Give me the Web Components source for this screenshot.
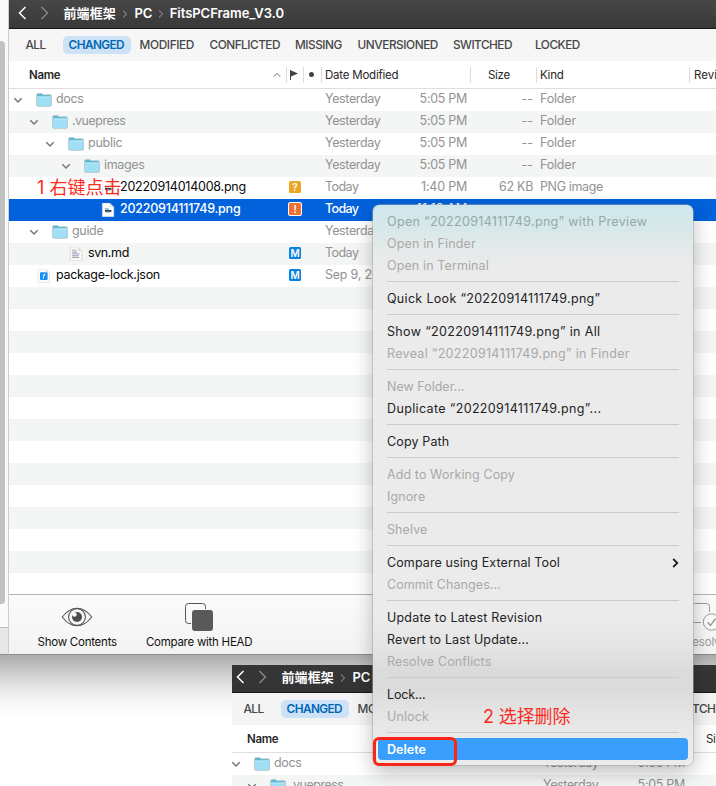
<!DOCTYPE html>
<html lang="zh">
<head>
<meta charset="utf-8">
<title>FitsPCFrame_V3.0</title>
<style>
html,body{margin:0;height:786px;overflow:hidden;background:#fff}
body{font-family:Inter,"Noto Sans CJK SC",sans-serif}
</style>
</head>
<body>
<svn-desktop></svn-desktop>
<script>
const make = (host, html) => { host.attachShadow({mode:'open'}).innerHTML = html; };
const label = (w, text, extra = '') => `<fit-label w="${w}" ${extra}>${text}</fit-label>`;

/* Desktop: sidebar sliver, two windows, menu and annotations */
class SvnDesktop extends HTMLElement {
  connectedCallback() {
    make(this, `<style>
      :host{display:block;position:relative;width:716px;height:786px;overflow:hidden;background:#fff}
      .shade{position:absolute;left:0;right:0;top:655px;height:66px;background:linear-gradient(#acacac,#bdbdbd 14%,#d2d2d2 32%,#e9e9e9 52%,#f8f8f8 74%,#fff)}
      .back{position:absolute;left:232px;top:665px;width:484px;height:121px;overflow:hidden}
      .back svn-window{margin:-1px 0 0 -5px;width:720px;--bar-top:#363636;--bar-end:#343434;--tabs:#f4f4f4}
      .front{position:absolute;left:0;top:0;width:716px;height:655px;display:flex;overflow:hidden}
      .front svn-window{flex:1}
      svn-menu{position:absolute;left:373px;top:205px}
      .note{position:absolute;color:#fc2b1c;font-size:18px;line-height:24px}
      .n1{left:37px;top:176px}.n2{left:483px;top:705px}
      .box{position:absolute;left:373px;top:737px;width:84px;height:29px;box-sizing:border-box;border:3px solid #fb2518;border-radius:6px}
    </style>
    <div class="shade"></div>
    <div class="back"><svn-window></svn-window></div>
    <div class="front"><side-sliver></side-sliver><svn-window full></svn-window></div>
    <div class="note n1">${label(84,'1 右键点击')}</div>
    <svn-menu></svn-menu>
    <div class="note n2">${label(87,'2 选择删除')}</div>
    <div class="box"></div>`);
  }
}

class SideSliver extends HTMLElement {
  connectedCallback() {
    make(this, `<style>
      :host{display:flex;flex-direction:column;box-sizing:border-box;width:9px;height:655px;background:#fafafa;border-right:1px solid #cdcdcd;border-bottom:1px solid #8f8f8f}
      .thumb{width:5px;height:563px;margin-top:41px;background:#c2c2c2;border-radius:0 4px 4px 0}
      .foot{margin-top:23px;flex:1;background:#e7e7e7;border-top:1px solid #bababa}
    </style><div class="thumb"></div><div class="foot"></div>`);
  }
}

/* Text set to a given width by adjusting its tracking */
class FitLabel extends HTMLElement {
  connectedCallback() {
    make(this, `<style>:host{display:inline-block;white-space:pre}span{display:inline-block}</style><span><slot></slot></span>`);
    const s = this.shadowRoot.querySelector('span');
    const target = +this.getAttribute('w') + .4;
    const n = this.textContent.length;
    const diff = (target - s.getBoundingClientRect().width) / n;
    s.style.letterSpacing = diff.toFixed(3) + 'px';
    this.style.width = target + 'px';
  }
}

class SvnIcon extends HTMLElement {
  connectedCallback() {
    const art = {
      folder:`<svg width="16" height="14" viewBox="0 0 16 14"><path d="M.6 2Q.6.6 2 .6h3.6l1.5 1.2H14q1.4 0 1.4 1.3V12q0 1.2-1.2 1.2H1.8Q.6 13.200.6 12z" fill="#5eb5d2"/><path d="M.6 3.500h14.800V12q0 1.300-1.200 1.300H1.800Q.6 13.300.6 12z" fill="#9fe0f6"/><path d="M.6 4h14.800" stroke="#c4effb" stroke-width=".8"/><path d="M.6 2.200Q.6.6 2 .6h3.600l1.500 1.200H14q1.400 0 1.400 1.300V12q0 1.300-1.200 1.300H1.800Q.6 13.300.6 12z" fill="none" stroke="#b9c6ca" stroke-width=".8"/></svg>`,
      png:`<svg width="16" height="14" viewBox="0 0 16 14"><path d="M2.300 0h7.200l4.300 4v9.700H2.300z" fill="#fdfdfd" stroke="#d4d6d8" stroke-width=".5"/><path d="M9.500 0v4h4.300z" fill="#dfe3e8"/><path d="M4.800 5h4v1.800h-4z" fill="#91c0e7"/><path d="M5 7h6.400v1.800H5z" fill="#29374c"/><path d="M6 8.800h4.500v1H6z" fill="#a6b3c1"/></svg>`,
      md:`<svg width="16" height="14" viewBox="0 0 16 14"><path d="M2.300 0h7.500l4 4v9.700H2.300z" fill="#fafafa" stroke="#cdcfd1" stroke-width=".6"/><path d="M9.800 0v4h4z" fill="#dfdfe2"/><path d="M4.200 3.200h4M4.200 7h7.500M4.200 10.500h7" stroke="#b394ad"/><path d="M4.200 5.200h5M4.200 8.800h6.500" stroke="#899fc4"/></svg>`,
      json:`<svg width="16" height="14" viewBox="0 0 16 14"><path d="M2 0h8l3.500 3.500v10.200H2z" fill="#fafcfe" stroke="#d3d7db" stroke-width=".6"/><path d="M10 0v3.500h3.500z" fill="#dde5ed"/><rect x="4" y="3.300" width="7.600" height="7.600" rx="1.200" fill="#168cf2"/><path d="M8.700 4.500L7 10M6.600 6h2.700" stroke="#d9efff" fill="none"/></svg>`,
      down:`<svg width="10" height="8" viewBox="0 0 10 8"><path d="M1.300 2.200L5 6l3.700-3.800" fill="none" stroke="#777" stroke-width="1.500"/></svg>`,
      caret:`<svg width="8" height="6" viewBox="0 0 8 6"><path d="M.7 4.800L4 1.200l3.300 3.600" fill="none" stroke="#777"/></svg>`,
      flag:`<svg width="10" height="12" viewBox="0 0 10 12"><path d="M1.500 1v10" stroke="#444"/><path d="M1.500 1.200L9 4.500 1.500 7.700z" fill="#444"/></svg>`,
      eye:`<svg width="32" height="20" viewBox="0 0 32 20"><path d="M1.300 10Q8 1.200 16 1.200T30.700 10Q24 18.800 16 18.800T1.300 10z" fill="none" stroke="#555" stroke-width="1.100"/><circle cx="16" cy="10" r="8.400" fill="none" stroke="#555" stroke-width="1.100"/><circle cx="16" cy="10" r="5" fill="#4c4c4c"/><circle cx="13.500" cy="7.500" r="2.200" fill="#fafafa"/></svg>`,
      compare:`<svg width="28" height="28" viewBox="0 0 28 28"><path d="M6 20.500H3.500q-3 0-3-3v-14q0-3 3-3h14q3 0 3 3V6" fill="none" stroke="#555"/><rect x="7" y="7" width="21" height="21" rx="3" fill="#595959"/></svg>`,
      resolve:`<svg width="32" height="28" viewBox="0 0 32 28"><path d="M11 19.500H4.500q-3 0-3-3v-13q0-3 3-3h12q3 0 3 3V9" fill="none" stroke="#999"/><circle cx="21.500" cy="19" r="8.200" fill="#fafafa" stroke="#999"/><path d="M17.500 19.200l3 3.300 5-7" fill="none" stroke="#999" stroke-width="1.300"/></svg>`,
      back:`<svg width="9" height="14" viewBox="0 0 9 14"><path d="M7.500 1L1.500 7l6 6" fill="none" stroke="currentColor" stroke-width="1.500"/></svg>`,
      next:`<svg width="9" height="14" viewBox="0 0 9 14"><path d="M1.500 1l6 6-6 6" fill="none" stroke="currentColor" stroke-width="1.300"/></svg>`,
      crumb:`<svg width="6" height="8" viewBox="0 0 6 8"><path d="M1 .6L4.600 4 1 7.400" fill="none" stroke="#a0a0a0"/></svg>`,
      sub:`<svg width="7" height="10" viewBox="0 0 7 10"><path d="M1.200 1L5.300 5 1.200 9" fill="none" stroke="#222" stroke-width="1.800"/></svg>`
    };
    make(this, `<style>:host{display:inline-flex;flex:none}svg{display:block}</style>` + art[this.getAttribute('name')]);
  }
}

class SvnWindow extends HTMLElement {
  connectedCallback() {
    const tabs = [[26,'ALL',19.500],[69,'CHANGED',55],[140,'MODIFIED',54],[210,'CONFLICTED',70],[295.500,'MISSING',46.500],[358,'UNVERSIONED',80],[453.500,'SWITCHED',58.500],[535.500,'LOCKED',44.500]];
    let end = 9.4;
    const tabHtml = tabs.map(([x,t,w]) => {
      const m = x - end; end = x + w + .4;
      return `<span class="tab ${t==='CHANGED'?'on':''}" style="padding-left:${m}px">${label(w,t)}</span>`;
    }).join('');
    const Y = ['Yesterday',55], T = ['Today',33], F = ['Folder',35.500];
    const rows = [
      [0,'folder','docs',27,Y,['5:05 PM',47],['--',11],F],
      [1,'folder','.vuepress',53,Y,['5:05 PM',47],['--',11],F],
      [2,'folder','public',34,Y,['5:05 PM',47],['--',11],F],
      [3,'folder','images',40,Y,['5:05 PM',47],['--',11],F],
      [4,'png','20220914014008.png',125.500,T,['1:40 PM',45.500],['62 KB',33.500],['PNG image',62.500],'?'],
      [4,'png','20220914111749.png',120,T,['11:18 AM',50],['',0],['',0],'!'],
      [1,'folder','guide',31,Y,['',0],['',0],['',0]],
      [2,'md','svn.md',40.500,T,['',0],['',0],['',0],'M'],
      [0,'json','package-lock.json',103.500,['Sep 9, 2022',69],['',0],['',0],['',0],'M']
    ];
    const opt = ([t,w]) => t ? label(w,t) : '';
    const body = rows.map(([d,ic,n,w,date,time,size,kind,b]) => `<div class="row ${b?'file':''} ${b==='!'?'sel':''}">
      <div class="name" style="padding-left:${4+16*d}px"><span class="tw">${ic==='folder'?'<svn-icon name="down"></svn-icon>':''}</span><svn-icon name="${ic}"></svn-icon>${label(w,n)}</div>
      <div class="flag">${b?`<status-badge kind="${b}"></status-badge>`:''}</div><div></div>
      <div class="date">${opt(date)}${opt(time)}</div><div class="size">${opt(size)}</div><div class="kind">${opt(kind)}</div></div>`).join('');
    make(this, `<style>
      :host{display:flex;flex-direction:column;height:655px;box-sizing:border-box;border-bottom:1px solid #8c8c8c;background:#fff;overflow:hidden;min-width:0}
      .title{flex:none;box-sizing:border-box;height:29px;padding:0 0 2px 9px;border-bottom:1px solid #161616;background:linear-gradient(var(--bar-top,#474747),var(--bar-end,#393939));color:#fff;font-size:13px;font-weight:600;display:flex;align-items:center;line-height:20px}
      .fwd{color:#8b8b8b;margin:0 15px 0 12.500px}
      .title svn-icon[name=crumb]{margin:1px 6.600px 0 6px}
      .title svn-icon.c2{margin:1px 6px 0 5.300px}
      .tabs{flex:none;height:32px;background:var(--tabs,#f6f6f6);display:flex;align-items:center;color:#474747;font-size:11.800px;font-weight:500;line-height:18px;white-space:nowrap}
      .tab{flex:none;display:block;height:18px}
      .on{color:#0068b5;font-weight:600;position:relative}
      .on::before{content:"";position:absolute;right:-6.600px;top:0;width:68px;height:18px;border-radius:5px;background:#cde2f6}
      .on fit-label{position:relative}
      .head,.row{display:grid;grid-template-columns:278px 17px 18px 149px 66px 153px 80px;flex:none;align-items:center}
      .head{height:27px;border-bottom:1px solid #dedede;font-size:11.500px;color:#262626}
      .head>div{height:16px;line-height:16px;box-sizing:border-box;border-right:1px solid #dcdcdc;display:flex;align-items:center}
      .head .h1{font-weight:600;padding:0 5px 0 20px;justify-content:space-between}
      .head .h3{justify-content:center}.head .h3 i{width:5px;height:5px;border-radius:3px;background:#444;margin-right:2px}
      .rows{flex:1;min-height:0;overflow:hidden;background:repeating-linear-gradient(#fff 0 22px,#f4f5f5 22px 44px)}
      .row{height:22px;font-size:12.500px;line-height:20px;color:#929292}
      .row>div{height:22px;box-sizing:border-box;padding-bottom:2px;display:flex;align-items:center}
      .tw{width:10px;margin-right:13px;display:flex;padding-top:2px}
      .name>svn-icon{margin-right:4px;padding-top:1px}
      .file .name{color:#080808}
      .date,.size,.kind{padding:0 4px 0 3px}.date{justify-content:space-between}.size{justify-content:flex-end}
      .row .flag{justify-content:center;padding-right:1px}
      .sel,.sel .name{background:#0262dc;color:#fff}.sel{font-weight:500}
      .foot{flex:none;box-sizing:border-box;height:60px;border-top:1px solid #b4b4b4;background:linear-gradient(#fbfbfb,#f3f3f3);display:flex;padding:7px 0 0 28.500px;font-size:11.500px;color:#111}
      .act{flex:none;display:flex;flex-direction:column;align-items:center;height:50px;line-height:16px}
      .act .pic{height:29px;display:flex;align-items:center;margin-bottom:3px}
    </style>
    <div class="title"><svn-icon name="back"></svn-icon><svn-icon name="next" class="fwd"></svn-icon>${label(52,'前端框架')}<svn-icon name="crumb"></svn-icon>${label(17.500,'PC')}<svn-icon name="crumb" class="c2"></svn-icon>${label(114,'FitsPCFrame_V3.0')}</div>
    <div class="tabs">${tabHtml}</div>
    <div class="head"><div class="h1">${label(31,'Name')}<svn-icon name="caret"></svn-icon></div><div style="padding-left:2px"><svn-icon name="flag"></svn-icon></div><div class="h3"><i></i></div><div style="padding-left:3px">${label(73,'Date Modified')}</div><div style="padding-left:17px">${label(21.500,'Size')}</div><div style="padding-left:3px">${label(23,'Kind')}</div><div style="padding-left:4px">${label(45,'Revision')}</div></div>
    <div class="rows">${body}</div>
    <div class="foot"><div class="act"><div class="pic"><svn-icon name="eye"></svn-icon></div>${label(79,'Show Contents')}</div>
      <div class="act" style="margin-left:29px"><div class="pic"><svn-icon name="compare"></svn-icon></div>${label(106,'Compare with HEAD')}</div>
      <div class="act" style="margin-left:433px;color:#999"><div class="pic"><svn-icon name="resolve"></svn-icon></div>${label(41,'Resolve')}</div></div>`);
  }
}

class StatusBadge extends HTMLElement {
  connectedCallback() {
    const k = this.getAttribute('kind');
    const c = {'?':'#eba625','!':'#ec6f35','M':'#0a83df'}[k];
    make(this, `<style>:host{display:block;box-sizing:border-box;width:12px;height:12px;border-radius:1.500px;background:${c};color:#fff;font:600 10px/12px Inter,sans-serif;text-align:center;${k==='!'?'box-shadow:0 0 0 1px #fff;':''}}</style>${k}`);
  }
}

class MenuItem extends HTMLElement {
  connectedCallback() {
    make(this, `<style>
      :host{display:flex;align-items:center;justify-content:space-between;box-sizing:border-box;height:22px;margin:0 5px;padding:2px 9px 0 9px;color:#232323;font-size:12.500px;line-height:20px;border-radius:4px}
      :host([off]){color:#a9a9a9}
      :host([tint]){color:#94a8aa}
      :host([active]){background:#3a9ffc;color:#fff;font-weight:600}
    </style><slot></slot>`);
  }
}

class SvnMenu extends HTMLElement {
  connectedCallback() {
    const items = [
      ['Open “20220914111749.png” with Preview',260,'off tint'],['Open in Finder',88.500,'off'],['Open in Terminal',101.500,'off'],0,
      ['Quick Look “20220914111749.png”',213],0,
      ['Show “20220914111749.png” in All',213],['Reveal “20220914111749.png” in Finder',242.500,'off'],0,
      ['New Folder...',77,'off'],['Duplicate “20220914111749.png”...',214],0,
      ['Copy Path',62],0,
      ['Add to Working Copy',127.500,'off'],['Ignore',38,'off'],0,
      ['Shelve',40,'off'],0,
      ['Compare using External Tool',172.500,'','sub'],['Commit Changes...',113.500,'off'],0,
      ['Update to Latest Revision',155],['Revert to Last Update...',141.500],['Resolve Conflicts',104,'off'],0,
      ['Lock...',38],['Unlock',41.500,'off'],0,['Delete',38.500,'active']
    ];
    make(this, `<style>
      :host{display:block;box-sizing:border-box;width:320px;height:560px;padding:5px 0;border-radius:6px;background:linear-gradient(#cfe6ea,#d6e8ea 4%,#e2eaea 7%,#ebebeb 10.500%,#ebebeb 74%,#e4e4e4 79%,#dbdbdb 83%,#dbdbdb 86%,#e4e4e4 91%,#ebebeb 96%);box-shadow:0 0 0 .5px #a5a5a5,0 7px 20px rgba(0,0,0,.27)}
      hr{border:0;height:1px;margin:5px 14px;background:#cbcbcb}
    </style>` + items.map(i => i ? `<menu-item ${i[2]||''}>${label(i[1],i[0])}${i[3]?'<svn-icon name="sub"></svn-icon>':''}</menu-item>` : '<hr>').join(''));
  }
}

customElements.define('svn-desktop', SvnDesktop);
customElements.define('side-sliver', SideSliver);
customElements.define('svn-window', SvnWindow);
customElements.define('svn-menu', SvnMenu);
customElements.define('menu-item', MenuItem);
customElements.define('status-badge', StatusBadge);
customElements.define('svn-icon', SvnIcon);
customElements.define('fit-label', FitLabel);
</script>
</body>
</html>
